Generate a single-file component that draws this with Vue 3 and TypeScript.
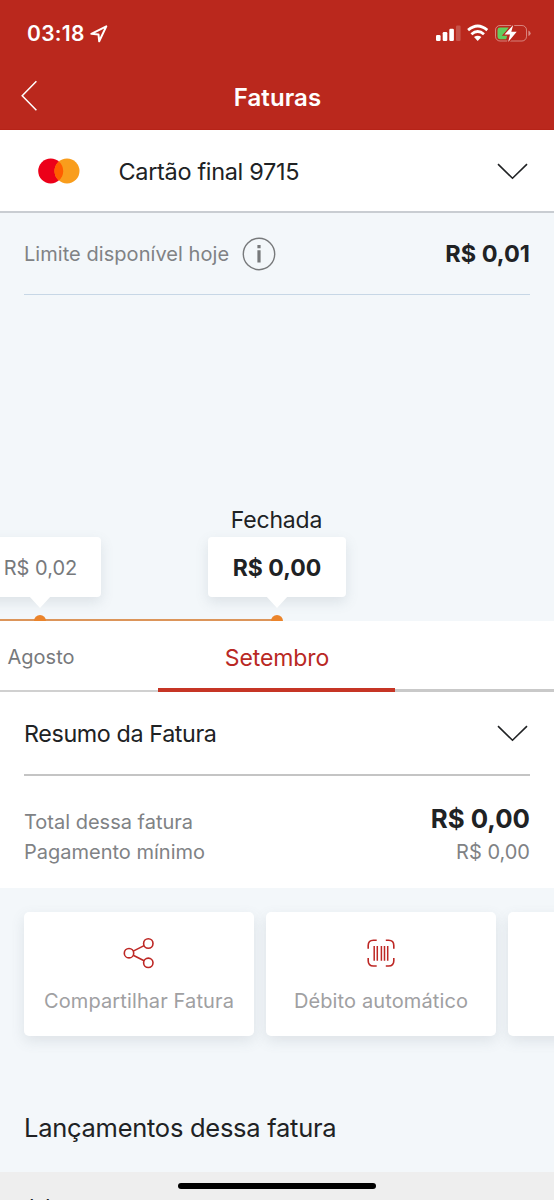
<script setup lang="ts">
interface Invoice { month: string; amount: string; status?: string; active?: boolean }
const invoices: Invoice[] = [
  { month: 'Agosto', amount: 'R$ 0,02' },
  { month: 'Setembro', amount: 'R$ 0,00', status: 'Fechada', active: true },
]
</script>

<template>
  <main class="screen">
    <header class="header">
      <div class="status">
        <span class="time">03:18</span>
        <svg class="loc" width="18" height="18" viewBox="0 0 18 18"><path d="M1.3 8.8 16.3 1.4 9.2 16.3 8.5 9.5Z" fill="none" stroke="#fff" stroke-width="2" stroke-linejoin="round" /></svg>
        <svg class="indicators" width="98" height="20" viewBox="0 0 98 20">
          <g fill="#fff">
            <rect x="1" y="11" width="4.6" height="6" rx="1.2" /><rect x="7.7" y="8" width="4.6" height="9" rx="1.2" /><rect x="14.3" y="4.8" width="4.6" height="12.2" rx="1.2" />
            <rect x="21" y="1.6" width="4.6" height="15.4" rx="1.2" opacity=".2" />
          </g>
          <g fill="none" stroke="#fff" stroke-width="2.8">
            <path d="M33.1 6.1Q42.7 -2.2 52.3 6.1" /><path d="M36.4 10.2Q42.7 4.7 49 10.2" />
          </g>
          <path d="M39 13.1Q42.7 10.2 46.4 13.1L42.7 17Z" fill="#fff" />
          <rect x="60.5" y="1.5" width="31" height="15.5" rx="4.5" fill="none" stroke="#fff" stroke-opacity=".42" />
          <path d="M93.4 6.4Q95.6 7.3 95.6 9.2T93.4 12Z" fill="#fff" opacity=".45" />
          <path d="M65 3.5H73.8L69 11H72.4L71.2 15.2H65Q62.5 15.2 62.5 12.8V5.9Q62.5 3.5 65 3.5Z" fill="#62cd5d" />
          <path d="M78.2 1 69.5 10.5H75L73.2 18 81.7 7.8H76.3Z" fill="#fff" stroke="#ba281d" stroke-width="2.4" paint-order="stroke" />
        </svg>
      </div>
      <div class="navbar">
        <svg width="17" height="32" viewBox="0 0 17 32"><path d="M15.4 1.2 1.2 15.7 15.4 30.2" fill="none" stroke="#fff" stroke-width="1.5" /></svg>
        <h1>Faturas</h1>
      </div>
    </header>

    <section class="card-select">
      <svg width="42" height="26" viewBox="0 0 42 26"><circle cx="12.7" cy="13" r="12.5" fill="#ec0019" /><circle cx="29" cy="13" r="12.5" fill="#f99d1c" /><path d="M20.85 3.5A12.5 12.5 0 0 1 20.85 22.5A12.5 12.5 0 0 1 20.85 3.5Z" fill="#ff5d00" /></svg>
      <span class="card-name">Cartão final 9715</span>
      <svg class="chevron" width="31" height="17" viewBox="0 0 31 17"><path d="M1 1.1 15.5 15.2 30 1.1" /></svg>
    </section>

    <section class="limit-area">
      <div class="limit">
        <span class="limit-label">Limite disponível hoje</span>
        <svg width="34" height="34" viewBox="0 0 34 34"><circle cx="17" cy="17" r="15.7" fill="none" stroke="#77797b" stroke-width="1.4" /><path d="M17 8V11.2M17 13.3V25.5" stroke="#77797b" stroke-width="3.2" /></svg>
        <strong class="limit-value">R$ 0,01</strong>
      </div>
      <div class="timeline">
        <div v-for="item in invoices" :key="item.month" class="point" :class="{ current: item.active }">
          <span v-if="item.status" class="state">{{ item.status }}</span>
          <div class="bubble"><span>{{ item.amount }}</span></div>
          <div class="track"><i /></div>
        </div>
      </div>
    </section>

    <nav class="tabs">
      <div v-for="item in invoices" :key="item.month" class="tab" :class="{ selected: item.active }"><span>{{ item.month }}</span></div>
      <div class="tab future" />
    </nav>

    <section class="summary">
      <div class="summary-head">
        <h2>Resumo da Fatura</h2>
        <svg class="chevron" width="31" height="17" viewBox="0 0 31 17"><path d="M1 1.1 15.5 15.2 30 1.1" /></svg>
      </div>
      <div class="line total"><span>Total dessa fatura</span><strong>R$ 0,00</strong></div>
      <div class="line minimum"><span>Pagamento mínimo</span><span class="min-value">R$ 0,00</span></div>
    </section>

    <section class="actions">
      <button class="action">
        <svg width="32" height="32" viewBox="0 0 32 32" fill="none" stroke="#bd2724" stroke-width="1.6"><circle cx="6" cy="16.2" r="4.7" /><circle cx="25.3" cy="6.5" r="4.7" /><circle cx="25.3" cy="25.8" r="4.7" /><path d="M10.2 14.1 21.1 8.6M10.2 18.3 21.1 23.7" /></svg>
        <span class="share-label">Compartilhar Fatura</span>
      </button>
      <button class="action">
        <svg width="32" height="32" viewBox="0 0 32 32" fill="none" stroke="#bd2724" stroke-width="1.6"><path d="M3.2 11.7V8.5Q3.2 3.3 8.4 3.3H11.7M20.8 3.3H23.6Q28.8 3.3 28.8 8.5V11.7M28.8 21V23.8Q28.8 29 23.6 29H20.8M11.7 29H8.4Q3.2 29 3.2 23.8V21" /><path d="M9.2 9V23.7M12.3 9V23.7M16.4 9V23.7M19.5 9V23.7M22.7 9V23.7" stroke-width="1.5" /></svg>
        <span class="debit-label">Débito automático</span>
      </button>
      <button class="action"></button>
    </section>

    <h2 class="entries-title">Lançamentos dessa fatura</h2>
    <footer class="entries"><span class="entry-date">dd</span><i class="home-indicator" /></footer>
  </main>
</template>

<style>
html, body { margin: 0; overflow: hidden; }
</style>

<style scoped>
* { box-sizing: border-box; }
.screen { width: 554px; height: 1200px; overflow: hidden; display: flex; flex-direction: column; background: #f3f7fa; color: #202224; font-family: Inter, Roboto, sans-serif; font-size: 20px; white-space: nowrap; }
.screen > * { flex-shrink: 0; }
h1, h2 { margin: 0; font-weight: 400; }
svg { display: block; flex: none; }
.header { height: 130px; color: #fff; background: #ba281d; border-bottom: 1px solid #b62318; }
.status { height: 67px; display: flex; align-items: center; padding: 0 21px 0 27px; }
.time { font-size: 21px; font-weight: 600; letter-spacing: .3px; }
.loc { margin-left: 5px; }
.indicators { margin-left: auto; }
.navbar { height: 62px; display: grid; grid-template-columns: 17px 1fr 17px; align-items: center; padding: 0 21px 4px; }
h1 { font-size: 24px; line-height: 30px; font-weight: 600; text-align: center; padding: 3px 0 0 1px; letter-spacing: .1px; }
.card-select { height: 83px; display: flex; align-items: center; padding: 1px 26px 0 38px; background: #fff; border-bottom: 2px solid #c9cdd2; }
.card-name { margin-left: 38.5px; font-size: 23.5px; letter-spacing: -.33px; }
.chevron { margin-left: auto; fill: none; stroke: #202224; stroke-width: 1.6; }
.limit-area { height: 408px; }
.limit { height: 82px; margin: 0 24px; display: flex; align-items: center; border-bottom: 1px solid #c7d7e6; }
.limit-label { color: #808285; width: 218px; letter-spacing: .05px; }
.limit-value { margin-left: auto; font-size: 23.5px; font-weight: 700; }
.timeline { height: 326px; margin-left: -79px; display: flex; align-items: flex-end; }
.point { width: 237px; flex: none; display: flex; flex-direction: column; align-items: center; }
.state { font-size: 23px; line-height: 32px; margin-bottom: 1px; letter-spacing: -.2px; }
.bubble { position: relative; width: 122px; height: 60px; display: flex; align-items: center; justify-content: center; padding-top: 2px; background: #fff; border-radius: 4px; color: #77797c; box-shadow: 0 5px 13px #5a6b7b26; }
.bubble span { margin-left: 2px; }
.current .bubble { width: 138px; color: #202224; font-size: 23px; font-weight: 700; }
.current .bubble span { margin-left: 1px; }
.bubble::after { content: ''; position: absolute; top: 59px; left: calc(50% - 11px); border: solid transparent; border-width: 12px 11px 0; border-top-color: #fff; }
.track { width: 100%; height: 24px; overflow: hidden; display: flex; justify-content: center; align-items: flex-end; background: linear-gradient(#dc955a, #dc955a) left bottom / 100% 2px no-repeat; }
.current .track { background-size: 50% 2px; }
.track i { width: 12px; height: 6px; background: #eb842b; border-radius: 6px 6px 0 0; }
.tabs { height: 71px; margin-left: -79px; display: flex; background: #fff; }
.tab { width: 237px; flex: none; display: flex; align-items: center; justify-content: center; padding-left: 3px; color: #77797c; border-bottom: 2px solid #d0d0d0; padding-top: 2px; }
.selected { font-size: 23px; letter-spacing: -.1px; color: #b92824; border-bottom: 4px solid #c63525; padding: 7px 0 0 1px; }
.future { border-bottom: 3px solid #c9c9c9; }
.summary { height: 196px; padding: 0 24px; background: #fff; color: #808285; }
.summary-head { height: 84px; display: flex; align-items: center; padding-right: 2px; color: #202224; border-bottom: 2px solid #c4c4c4; }
h2 { font-size: 23.3px; letter-spacing: -.38px; }
.line { display: flex; align-items: center; justify-content: space-between; height: 30px; }
.total { margin-top: 31px; }
.total strong { color: #202224; font-size: 25.8px; margin-top: -7px; }
.actions { display: flex; gap: 12px; padding: 24px 0 0 24px; height: 148px; }
.action { width: 230px; height: 124px; flex: none; display: flex; flex-direction: column; align-items: center; padding: 25px 0 0; border: 0; border-radius: 5px; background: #fff; color: #a0a0a2; font: inherit; box-shadow: 0 5px 14px #5a6b7b24; }
.action span { margin-top: 19px; line-height: 26px; letter-spacing: .12px; }
.entries-title { height: 136px; padding: 75px 24px 0; font-size: 25.5px; line-height: 34px; letter-spacing: -.27px; }
.entries { position: relative; height: 28px; background: #eee; overflow: hidden; }
.entry-date { position: absolute; left: 21px; top: 21.5px; font-size: 22px; letter-spacing: 2.6px; }
.home-indicator { position: absolute; left: 178px; top: 11px; width: 198px; height: 6px; border-radius: 4px; background: #000; }
</style>
